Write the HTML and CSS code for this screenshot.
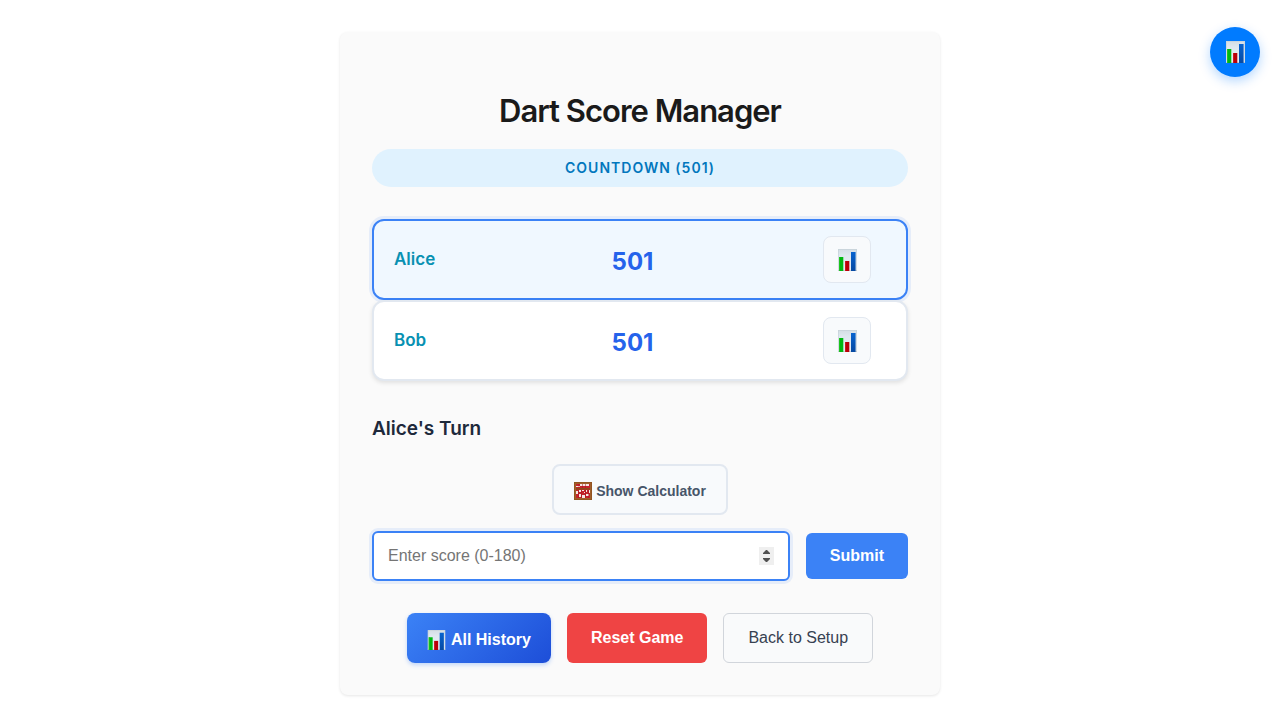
FILE: index.html
```html
<!DOCTYPE html>
<html lang="en">
<head>
<meta charset="utf-8">
<meta name="viewport" content="width=device-width, initial-scale=1">
<title>Dart Score Manager</title>
<link rel="stylesheet" href="styles.css">
</head>
<body>
<svg class="icon-defs" aria-hidden="true">
  <defs>
    <linearGradient id="panel" x1="0" y1="0" x2="0" y2="1"><stop offset="0" stop-color="#d3dde4"/><stop offset="0.3" stop-color="#dfe8f0"/><stop offset="1" stop-color="#e6eef5"/></linearGradient>
    <linearGradient id="blue" x1="0" y1="0" x2="0" y2="1"><stop offset="0" stop-color="#0763cf"/><stop offset="1" stop-color="#0649a2"/></linearGradient>
    <symbol id="chart" viewBox="0 0 19 22">
      <path fill="url(#panel)" d="M0 0h19v22H0z"/>
      <path fill="none" stroke="#bfcbd3" stroke-width="0.6" d="M0.3 22V0.3h18.4V22"/>
      <path fill="#b4bdc4" d="M0 21.4h19v0.6H0z"/>
      <path fill="#00b812" d="M1 8h4.3v14H1z"/>
      <path fill="#1cc41e" d="M1 8h1v14H1z"/>
      <path fill="#b90008" d="M7 12h4.3v10H7z"/>
      <path fill="#cb1820" d="M7 12h1v10H7z"/>
      <path fill="url(#blue)" d="M13 3h4.6v19H13z"/>
    </symbol>
    <symbol id="abacus" viewBox="0 0 18 18">
      <path fill="#c5232b" d="M2 2h14v14H2z"/>
      <path fill="#f4e6e3" d="M6 2h9v2H6zM2 4h4v1H2zM2 9h2v3H2zM5 8h2v2H5zM8 8h2v1H8zM12 8h1v2h-1zM15 8h1v3h-1zM5 12h2v3H5zM8 13h3v3H8zM12 12h3v2h-3zM10 10h1v1h-1z"/>
      <path fill="none" stroke="#a01820" stroke-width="0.5" d="M4.5 8v8M7.5 8v8M11.5 8v8M14.5 8v8M5 2v4M8.5 2v4M11.5 2v4"/>
      <path fill="#8b4a17" d="M2 6h14v1.6H2z"/>
      <path fill="none" stroke="#a0602a" stroke-width="2" d="M1 1h16v16H1z"/>
      <path fill="none" stroke="#854817" stroke-width="0.6" d="M0.3 0.3h17.4v17.4H0.3z"/>
    </symbol>
  </defs>
</svg>
<button class="history-fab" type="button" aria-label="Game history"><svg class="icon-chart"><use href="#chart"/></svg></button>
<main class="app">
  <h1 class="title">Dart Score Manager</h1>
  <div class="mode">Countdown (501)</div>
  <ul class="players">
    <li class="player player-active">
      <span class="player-name">Alice</span>
      <span class="player-score">501</span>
      <button class="player-stats" type="button" aria-label="Alice's history"><svg class="icon-chart"><use href="#chart"/></svg></button>
    </li>
    <li class="player">
      <span class="player-name">Bob</span>
      <span class="player-score">501</span>
      <button class="player-stats" type="button" aria-label="Bob's history"><svg class="icon-chart"><use href="#chart"/></svg></button>
    </li>
  </ul>
  <h2 class="turn">Alice's Turn</h2>
  <button class="calc-toggle" type="button"><svg class="icon-abacus"><use href="#abacus"/></svg><span>Show Calculator</span></button>
  <form class="score-form">
    <input class="score-input" type="number" min="0" max="180" placeholder="Enter score (0-180)" aria-label="Score">
    <button class="btn btn-submit" type="submit">Submit</button>
  </form>
  <div class="actions">
    <button class="btn btn-history" type="button"><svg class="icon-chart icon-chart-small"><use href="#chart"/></svg><span>All History</span></button>
    <button class="btn btn-reset" type="button">Reset Game</button>
    <button class="btn btn-back" type="button">Back to Setup</button>
  </div>
</main>
</body>
</html>
```
FILE: styles.css
```css
* {
  box-sizing: border-box;
}

body {
  margin: 0;
  padding: 32px 16px;
  background: #fff;
  color: #1a1a1a;
  font-family: Inter, sans-serif;
}

button,
input {
  font-family: "Liberation Sans", Arial, sans-serif;
}

button {
  cursor: pointer;
}

.icon-defs {
  position: absolute;
  width: 0;
  height: 0;
}

.icon-chart {
  flex: none;
  width: 19px;
  height: 22px;
}

.icon-chart-small {
  width: 19px;
  height: 20px;
}

.icon-abacus {
  flex: none;
  width: 18px;
  height: 18px;
}

.app {
  display: flex;
  flex-direction: column;
  max-width: 600px;
  margin: 0 auto;
  padding: 32px;
  border-radius: 8px;
  background: #fafafa;
  box-shadow: 0 1px 3px rgba(0, 0, 0, 0.1);
}

.title {
  margin: 24px 0 16px;
  font-size: 31px;
  font-weight: 600;
  line-height: 45px;
  letter-spacing: -1px;
  text-align: center;
}

.mode {
  margin-bottom: 32px;
  padding: 8px 16px;
  border-radius: 20px;
  background: #e0f2fe;
  color: #0277bd;
  font-size: 14px;
  font-weight: 600;
  line-height: 22px;
  letter-spacing: 1px;
  text-align: center;
  text-transform: uppercase;
}

.players {
  margin: 0 0 32px;
  padding: 0;
  list-style: none;
}

.player {
  display: grid;
  grid-template-columns: 1fr auto 1fr;
  align-items: center;
  padding: 15px 35px 15px 20px;
  border: 2px solid #e2e8f0;
  border-radius: 12px;
  background: #fff;
  box-shadow: 0 2px 4px rgba(0, 0, 0, 0.1);
}

.player-active {
  border-color: #3b82f6;
  background: #f0f8ff;
  box-shadow: 0 0 0 3px rgba(59, 130, 246, 0.1);
}

.player-name {
  padding-bottom: 2px;
  color: #0891b2;
  font-size: 17px;
  font-weight: 600;
}

.player-score {
  padding-top: 3px;
  color: #2563eb;
  font-size: 24px;
  font-weight: 700;
}

.player-stats {
  display: flex;
  align-items: center;
  justify-content: center;
  justify-self: end;
  width: 48px;
  height: 47px;
  padding: 1px 0 0;
  border: 1px solid #e2e8f0;
  border-radius: 8px;
  background: #f8fafc;
}

.turn {
  margin: 0 0 19px;
  color: #1e293b;
  font-size: 19px;
  font-weight: 600;
  line-height: 32px;
}

.calc-toggle {
  display: flex;
  align-items: center;
  align-self: center;
  gap: 4px;
  height: 51px;
  margin-bottom: 16px;
  padding: 2px 20px 0;
  border: 2px solid #e2e8f0;
  border-radius: 8px;
  background: #f8fafc;
  color: #475569;
  font-size: 14px;
  font-weight: 600;
}

.score-form {
  display: flex;
  align-items: center;
  gap: 16px;
  margin-bottom: 32px;
}

.score-input {
  flex: 1;
  min-width: 0;
  height: 50px;
  padding: 0 14px;
  border: 2px solid #3b82f6;
  border-radius: 6px;
  outline: none;
  background: #fff;
  box-shadow: 0 0 0 3px rgba(59, 130, 246, 0.1);
  font-size: 16px;
}

.score-input::placeholder {
  color: #757575;
}

.score-input::-webkit-inner-spin-button {
  appearance: none;
  width: 15px;
  height: 18px;
  opacity: 1;
  background: #efefef url("data:image/svg+xml,%3Csvg xmlns='http://www.w3.org/2000/svg' width='15' height='18'%3E%3Cpath fill='%23505050' d='M4 7V6L7 3h1l3 3v1zM4 11v1l3 3h1l3-3v-1z'/%3E%3C/svg%3E") center no-repeat;
}

.btn {
  height: 50px;
  padding: 0 24px;
  border: 0;
  border-radius: 6px;
  color: #fff;
  font-size: 16px;
  font-weight: 600;
}

.btn-submit {
  height: 46px;
  background: #3b82f6;
}

.actions {
  display: flex;
  flex-wrap: wrap;
  justify-content: center;
  gap: 16px;
}

.btn-history {
  display: flex;
  align-items: center;
  gap: 5px;
  padding: 3px 20px 0;
  border-radius: 8px;
  background: linear-gradient(135deg, #3b82f6, #1d4ed8);
  box-shadow: 0 2px 4px rgba(59, 130, 246, 0.3);
}

.btn-reset {
  background: #ef4444;
}

.btn-back {
  border: 1px solid #d1d5db;
  background: #f9fafb;
  color: #374151;
  font-weight: 400;
}

.history-fab {
  position: fixed;
  top: 27px;
  right: 20px;
  display: flex;
  align-items: center;
  justify-content: center;
  width: 50px;
  height: 50px;
  padding: 0;
  border: 0;
  border-radius: 50%;
  background: #007bff;
  box-shadow: 0 4px 12px rgba(0, 123, 255, 0.3);
}
```
